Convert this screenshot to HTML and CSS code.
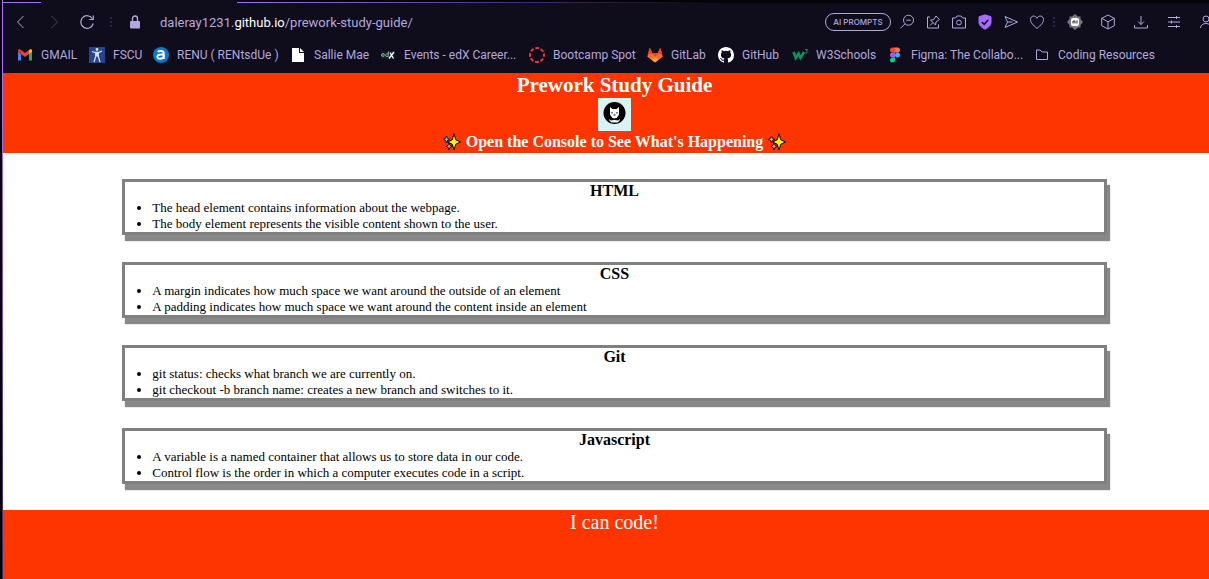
FILE: index.html
```html
<!DOCTYPE html>
<html lang="en">
<head>
<meta charset="utf-8">
<meta name="viewport" content="width=device-width, initial-scale=1">
<title>Prework Study Guide</title>
<link rel="stylesheet" href="styles.css">
</head>
<body>
<div class="window">
  <div class="tabs"><span class="tab-edge"></span><span class="tab-active"></span><span class="tab-rest"></span></div>
  <nav class="toolbar" aria-label="Browser toolbar">
    <div class="nav-buttons">
      <button class="tool" aria-label="Back"><svg viewBox="0 0 16 16"><path d="M10.500 2L4.500 8l6 6"/></svg></button>
      <button class="tool dim" aria-label="Forward"><svg viewBox="0 0 16 16"><path d="M5.500 2l6 6-6 6"/></svg></button>
      <button class="tool" aria-label="Reload"><svg viewBox="0 0 16 16"><path d="M14.200 9.500A6.300 6.300 0 1 1 13.300 4.500M14.300 1.500V5.500H10.300" stroke-width="1.200"/></svg></button>
    </div>
    <span class="dots"></span>
    <svg class="lock" viewBox="0 0 12 14"><rect x="1" y="6" width="10" height="7.500" rx="1" fill="#b3a8dc" stroke="none"/><path d="M3.500 6V3.500a2.500 2.500 0 0 1 5 0V6" stroke-width="1.400"/></svg>
    <a class="address" href="#">daleray1231.<span class="domain">github.io</span>/prework-study-guide/</a>
    <div class="actions">
      <button class="pill">AI PROMPTS</button>
      <div class="page-tools">
        <button class="tool" aria-label="Zoom out"><svg viewBox="0 0 16 16"><circle cx="9.500" cy="6.200" r="5"/><path d="M6 9.800L1.500 14.300M7.300 6.200h4.400"/></svg></button>
        <button class="tool" aria-label="Pin page"><svg viewBox="0 0 16 16"><path d="M5 3H2.500v11h11v-3.500M5 11.500l3-3M5.500 6l3-.3L11 2l3.500 3.500L11 8l-.5 3z"/></svg></button>
        <button class="tool" aria-label="Snapshot"><svg viewBox="0 0 16 16"><path d="M1.500 4h3L6 2h4l1.500 2h3v10h-13z"/><circle cx="8" cy="8.500" r="2.400"/></svg></button>
        <button class="tool" aria-label="Ad blocker"><svg viewBox="0 0 16 16"><path d="M8 .8l6 2v5.400c0 3.500-3 5.500-6 7-3-1.500-6-3.500-6-7V2.800z" fill="#a76bff" stroke="#a76bff"/><path d="M4.800 8l2.400 2.300 4-4.300" stroke="#15102a" stroke-width="1.700"/></svg></button>
        <button class="tool" aria-label="Send to device"><svg viewBox="0 0 16 16"><path d="M2 2.500L14.500 8 2 13.500 4.500 8zM4.500 8h5"/></svg></button>
        <button class="tool" aria-label="Favourite"><svg viewBox="0 0 16 16"><path d="M8 14.500C4 11 1.500 8.500 1.500 5.500 1.500 1.500 6.500.8 8 4.300c1.500-3.500 6.500-2.800 6.500 1.200 0 3-2.500 5.500-6.500 9z"/></svg></button>
        <span class="dots"></span>
      </div>
      <div class="extensions">
        <button class="tool" aria-label="AI extension"><svg viewBox="0 0 16 16"><path d="M5 2.500L8 0l3 2.500h2.500V5L16 8l-2.500 3v2.500H11L8 16l-3-2.500H2.500V11L0 8l2.500-3V2.500z" fill="#77747d" stroke="none"/><rect x="4" y="4" width="8" height="8" rx="2" fill="#fff" stroke="none"/><path d="M6 9.500V7h2v2.500M10 6.500v3" stroke="#222"/></svg></button>
        <button class="tool" aria-label="Extensions"><svg viewBox="0 0 16 16"><path d="M8 1l6.300 3.300v7.400L8 15l-6.300-3.300V4.300zM1.700 4.300L8 7.800l6.300-3.500M8 7.800V15"/></svg></button>
        <button class="tool" aria-label="Downloads"><svg viewBox="0 0 16 16"><path d="M8 2v8.500M5 7.500l3 3 3-3M1.500 11v3h13v-3"/></svg></button>
        <button class="tool" aria-label="Easy setup"><svg viewBox="0 0 16 16"><path d="M2 3.500h12M2 8h12M2 12.500h12M10.500 2v3M5.500 6.500v3M10.500 11v3"/></svg></button>
        <button class="tool" aria-label="Profile"><svg viewBox="0 0 16 16"><circle cx="7" cy="5" r="3"/><path d="M1.500 14c0-6 11-6 11 0"/></svg></button>
      </div>
    </div>
  </nav>
  <nav class="bookmarks" aria-label="Bookmarks">
    <a href="#"><svg viewBox="0 0 16 16"><g stroke="none"><path d="M1 13.500V4l3 2v7.500z" fill="#4285f4"/><path d="M15 13.500V4l-3 2v7.500z" fill="#34a853"/><path d="M1 5V3.500c0-1.300 1.400-1.600 2.300-1L8 6l4-3v4l-4 3-4-3z" fill="#ea4335"/><path d="M1 3.500L4 5v2L1 5z" fill="#c5221f"/><path d="M12 3l.7-.5c1-.6 2.300-.3 2.300 1V5l-3 2z" fill="#fbbc04"/></g></svg>GMAIL</a>
    <a href="#"><svg viewBox="0 0 16 16"><path fill="#27458c" stroke="none" d="M0 0h16v16H0z"/><circle cx="8" cy="2.500" r="1.400" fill="#d4e1ff" stroke="none"/><path d="M3 4.500L6.500 5.500h3L13 4M6.700 5.500v4L5 15M9.300 5.500v4L11 15M8 5.500v4" stroke="#d4e1ff" stroke-width="1.300"/></svg>FSCU</a>
    <a href="#"><svg viewBox="0 0 16 16"><circle cx="8" cy="8" r="8" fill="#0879c8" stroke="none"/><path d="M4.800 5C6 3.500 10.800 3.300 10.800 6.500V12M10.800 7.500C4.500 7 4 8.500 4.500 10.500c.8 2 5.500 1.500 6.300-1" stroke="#fff" stroke-width="2"/></svg>RENU ( RENtsdUe )</a>
    <a href="#"><svg viewBox="0 0 16 16"><path d="M2 1h7v5h5v9H2z" fill="#fff" stroke="none"/><path d="M10 1v4h4z" fill="#fff" stroke="none"/></svg>Sallie Mae</a>
    <a href="#"><svg viewBox="0 0 16 16"><path d="M1 4h14v8H1z" fill="#08201f" stroke="none"/><path d="M1.500 8h3c0-2-3-2-3 0s2 2 3 1M8.500 4.500L8 10M8 7c-3-1-3.500 3 0 2.500" stroke="#9fa5a8"/><path d="M10 5.500l3.500 6M14 5l-5 6.500" stroke="#fff" stroke-width="1.300"/></svg>Events - edX Career...</a>
    <a href="#"><svg viewBox="0 0 16 16"><circle cx="8" cy="8" r="7" stroke="#e53935" stroke-width="2" stroke-dasharray="3.800 1.700" stroke-dashoffset="1.900"/></svg>Bootcamp Spot</a>
    <a href="#"><svg viewBox="0 0 16 16"><g stroke="none"><path d="M8 15.500L.3 9.700 2.800.8l2.500 5.400h5.400L13.200.8l2.500 8.900z" fill="#fc6d26"/><path d="M2.800.8L.5 8l4.800-1.800L8 10l2.700-3.800L15.500 8 13.200.8l-2.500 5.400H5.300z" fill="#e24329"/><path d="M8 15.500L4.500 12.800 8 10l3.500 2.800z" fill="#fca326"/></g></svg>GitLab</a>
    <a href="#"><svg viewBox="0 0 16 16"><path fill="#fff" stroke="none" d="M8 0C3.580 0 0 3.580 0 8c0 3.540 2.290 6.530 5.470 7.590.4.070.55-.17.55-.38 0-.19-.01-.82-.01-1.490-2.010.37-2.530-.49-2.690-.94-.09-.23-.48-.94-.82-1.130-.28-.15-.68-.52-.01-.53.63-.01 1.080.58 1.230.82.72 1.210 1.870.87 2.330.66.07-.52.28-.87.51-1.070-1.780-.2-3.640-.89-3.640-3.950 0-.87.31-1.590.82-2.150-.08-.2-.36-1.020.08-2.120 0 0 .67-.21 2.200.82a7.600 7.600 0 0 1 4 0c1.530-1.040 2.200-.82 2.200-.82.44 1.100.16 1.920.08 2.120.51.56.82 1.270.82 2.150 0 3.070-1.870 3.750-3.650 3.950.29.25.54.73.54 1.480 0 1.070-.01 1.930-.01 2.200 0 .21.150.46.55.38A8.010 8.010 0 0 0 16 8c0-4.420-3.580-8-8-8z"/></svg>GitHub</a>
    <a href="#"><svg viewBox="0 0 16 16"><path d="M1.500 5l2.300 6L6.500 6.500l2 4.500L12 5" stroke="#079461" stroke-width="2.600"/><path d="M13 2.500h2.500L14.300 4c2 .3 1 2.800-1.200 1.800" stroke="#079461"/></svg>W3Schools</a>
    <a href="#"><svg viewBox="0 0 16 16"><g stroke="none"><path d="M8 .5H5.500a2.500 2.500 0 0 0 0 5H8z" fill="#f24e1e"/><path d="M8 .5h2.500a2.500 2.500 0 0 1 0 5H8z" fill="#ff7262"/><path d="M8 5.500H5.500a2.500 2.500 0 0 0 0 5H8z" fill="#a259ff"/><circle cx="10.500" cy="8" r="2.500" fill="#1abcfe"/><path d="M8 10.500H5.500A2.500 2.500 0 1 0 8 13z" fill="#0acf83"/></g></svg>Figma: The Collabo...</a>
    <a href="#"><svg viewBox="0 0 16 16"><path d="M2.500 3h3.500l2 2h5.500v7.500h-11z"/></svg>Coding Resources</a>
  </nav>
  <div class="page">
    <header class="hero">
      <h1>Prework Study Guide</h1>
      <svg class="cat" viewBox="0 0 33 33" role="img" aria-label="Cat logo"><path d="M0 0h33v33H0z" fill="#d8f3f3"/><circle cx="16.500" cy="15" r="11" fill="#000"/><path d="M12 9l2.500 2h4L21 9v6.500c0 2-1 3-2 3.500v1l2.500 1v2l-2 1.500h-6l-2-1.500v-2l2.500-1v-1c-1-.5-2-1.500-2-3.500z" fill="#fff"/><path d="M14 14v1.500M19 14v1.500M15.500 17h2M12.500 20l4 1 4-1v2l-4-.5-4 .5z" stroke="#000" fill="#000"/></svg>
      <h2><svg class="sparkles" viewBox="0 0 18 18"><use href="#sparkle"/></svg><span>Open the Console to See What's Happening</span><svg class="sparkles" viewBox="0 0 18 18"><g id="sparkle" stroke="#000" stroke-linejoin="round"><path d="M11 .8l1.800 6L17.500 9l-4.700 2.200L11 17l-1.800-5.800L4.500 9l4.700-2.200z" fill="#fff000"/><path d="M3.500 3l1 2.300 2.300 1-2.300 1-1 2.400-1-2.400-2-1 2-1z" fill="#5bd0f4" stroke-width=".8"/><path d="M6 10l1 2.300 2.300 1-2.300 1L6 17l-1-2.700-2-1 2-1z" fill="#f78ba8" stroke-width=".8"/></g></svg></h2>
    </header>
    <main class="topics">
      <section class="card"><h2>HTML</h2><ul><li>The head element contains information about the webpage.</li><li>The body element represents the visible content shown to the user.</li></ul></section>
      <section class="card"><h2>CSS</h2><ul><li>A margin indicates how much space we want around the outside of an element</li><li>A padding indicates how much space we want around the content inside an element</li></ul></section>
      <section class="card"><h2>Git</h2><ul><li>git status: checks what branch we are currently on.</li><li>git checkout -b branch name: creates a new branch and switches to it.</li></ul></section>
      <section class="card"><h2>Javascript</h2><ul><li>A variable is a named container that allows us to store data in our code.</li><li>Control flow is the order in which a computer executes code in a script.</li></ul></section>
    </main>
    <footer class="foot">I can code!</footer>
  </div>
</div>
</body>
</html>
```
FILE: styles.css
```css
* { box-sizing: border-box; }
body { margin: 0; background: #05030a; }
h1, h2, ul { margin: 0; padding: 0; }
a { color: inherit; text-decoration: none; }

.window {
  display: flex;
  flex-direction: column;
  min-height: 100vh;
  margin-left: 2px;
  border-left: 1px solid #7d4fd0;
  border-image: linear-gradient(#a76bff 20%, #35285f) 1;
  overflow: hidden;
  background: #0f0c1c;
  color: #b3a8dc;
  font-family: Roboto, "Noto Sans", sans-serif;
}
.window svg { flex: none; fill: none; stroke: #b3a8dc; }

.tabs { display: flex; height: 3px; background: #05030a; }
.tab-edge { width: 38px; border-bottom: 1px solid #a76bff; }
.tab-active { width: 196px; background: #0f0c1c; }
.tab-rest { flex: 1; background: linear-gradient(90deg, #a76bff, #05030a 50%) bottom / 100% 1px no-repeat; }

.toolbar { display: flex; align-items: center; height: 38px; padding-left: 10px; white-space: nowrap; }
.nav-buttons { display: flex; gap: 17px; }
.tool { flex: none; display: block; width: 16px; height: 16px; padding: 0; border: 0; background: none; }
.tool svg { display: block; width: 16px; height: 16px; }
.dim { opacity: .35; }
.dots { flex: none; width: 2px; height: 10px; background: repeating-linear-gradient(#2b2247 0 2px, transparent 2px 4px); }
.nav-buttons + .dots { margin: 0 17px 0 15px; }
.lock { width: 12px; height: 14px; }
.address { margin-left: 19px; font-size: 13px; }
.domain { color: #fff; }
.actions { display: flex; align-items: center; gap: 8px; margin-left: auto; margin-right: -6px; }
.page-tools { display: flex; align-items: center; gap: 10px; }
.page-tools .dots { margin-left: -2px; }
.pill { width: 66px; height: 18px; padding: 0; border: 1px solid #b3a8dc; border-radius: 9px; background: none; color: #b3a8dc; font: 500 8px Inter, sans-serif; }
.extensions { display: flex; gap: 17px; margin-left: 4px; }

.bookmarks {
  display: grid;
  grid-template-columns: 72px 64px 137px 90px 149px 118px 71px 74px 95px 147px auto;
  align-items: center;
  height: 32px;
  padding-left: 14px;
  padding-bottom: 4px;
  font-size: 12px;
  white-space: nowrap;
}
.bookmarks a { display: flex; align-items: center; gap: 8px; }
.bookmarks svg { width: 16px; height: 16px; }

.page {
  flex: 1;
  display: flex;
  flex-direction: column;
  margin-right: -17px;
  background: #fff;
  color: #000;
  font-family: "Liberation Serif", "Times New Roman", serif;
}
.hero { display: flex; flex-direction: column; align-items: center; background: #ff3500; color: #fff; }
.hero h1 { font-size: 21px; line-height: 25px; }
.hero h2 { display: flex; align-items: center; gap: 5px; font-size: 16px; line-height: 22px; }
.window .cat, .window .sparkles { stroke: none; }
.cat { width: 33px; height: 33px; }
.sparkles { width: 18px; height: 18px; }

.topics { display: flex; flex-direction: column; align-items: center; gap: 27px; padding: 26px 0; }
.card { width: calc(80% + 6px); border: 3px solid #808080; box-shadow: 3px 6px 1px #888; }
.card h2 { font-size: 16px; line-height: 18px; text-align: center; }
.card ul { padding-left: 27px; font-size: 13px; line-height: 16px; }
.foot { flex: 1; background: #ff3500; color: #fff; font-size: 20px; line-height: 24px; text-align: center; }
```
